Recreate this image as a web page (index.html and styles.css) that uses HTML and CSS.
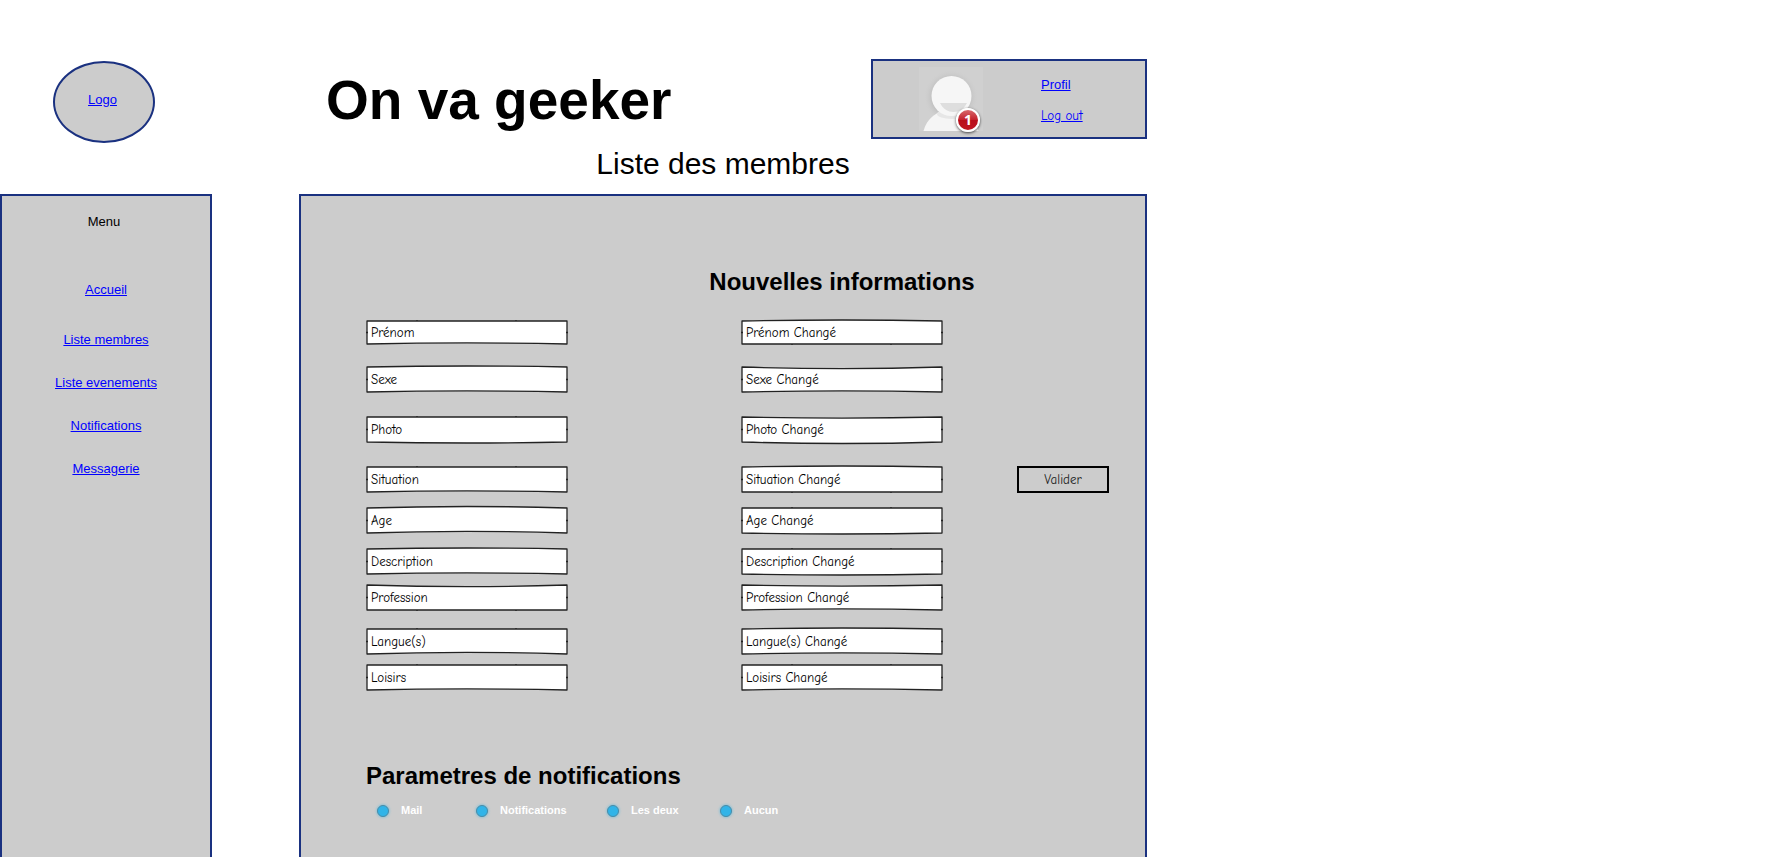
FILE: index.html
```
<!DOCTYPE html>
<html lang="fr">
<head>
<meta charset="utf-8">
<title>On va geeker</title>
<link rel="stylesheet" href="styles.css">
</head>
<body>
<div class="page">
  <header class="header">
    <div class="logo"><a href="#">Logo</a></div>
    <h1 class="title">On va geeker</h1>
    <div class="user">
      <div class="avatar">
        <svg viewBox="0 0 64 64" width="64" height="64" aria-hidden="true">
          <defs>
            <radialGradient id="halo"><stop offset="0.7" stop-color="#aaa"/><stop offset="1" stop-color="#ccc" stop-opacity="0"/></radialGradient>
          </defs>
          <rect width="64" height="64" fill="#d0d0d0"/>
          <circle cx="32" cy="30" r="27" fill="url(#halo)" opacity="0.4"/>
          <path d="M4.500 64C8 51 18 43 32 43s24 8 27.500 21z" fill="#f5f5f5"/>
          <ellipse cx="33" cy="47" rx="15" ry="5" fill="#e6e6e6"/>
          <circle cx="32.500" cy="29" r="20" fill="#f6f6f6"/>
          <path d="M21 36h27c-3 6-8 9-13.500 9S24 42 21 36z" fill="#dedede"/>
        </svg>
        <span class="badge">1</span>
      </div>
      <nav class="user-links">
        <a href="#">Profil</a>
        <a href="#" class="hand">Log out</a>
      </nav>
    </div>
    <p class="subtitle">Liste des membres</p>
  </header>

  <nav class="sidebar">
    <p class="menu-title">Menu</p>
    <ul class="menu">
      <li class="home"><a href="#">Accueil</a></li>
      <li><a href="#">Liste membres</a></li>
      <li><a href="#">Liste evenements</a></li>
      <li><a href="#">Notifications</a></li>
      <li><a href="#">Messagerie</a></li>
    </ul>
  </nav>

  <main class="content">
    <form>
      <div class="row head"><h2 class="new">Nouvelles informations</h2></div>

      <div class="row first">
        <div class="field"><svg viewBox="0 0 202 24" preserveAspectRatio="none"><path d="M1 1H201V23Q101 21 1 23ZM51 0v1M150 0v1M0 12h2M200 12h2"/></svg><input aria-label="Prénom" value="Prénom"></div>
        <div class="field changed"><svg viewBox="0 0 202 24" preserveAspectRatio="none"><path d="M1 1Q101 -1 201 1V23H1ZM51 23v1M150 23v1M0 12h2M200 12h2"/></svg><input aria-label="Nouveau prénom" value="Prénom Changé"></div>
      </div>
      <div class="row gap-l">
        <div class="field"><svg viewBox="0 0 202 26" preserveAspectRatio="none"><path d="M1 1Q101 -1 201 1V25Q101 23 1 25ZM0 13h2M200 13h2"/></svg><input aria-label="Sexe" value="Sexe"></div>
        <div class="field changed"><svg viewBox="0 0 202 26" preserveAspectRatio="none"><path d="M1 1Q101 4 201 1V25Q101 23 1 25ZM0 13h2M200 13h2"/></svg><input aria-label="Nouveau sexe" value="Sexe Changé"></div>
      </div>
      <div class="row gap-l">
        <div class="field"><svg viewBox="0 0 202 26" preserveAspectRatio="none"><path d="M1 1H201V25Q101 27 1 25ZM51 0v1M150 0v1M0 13h2M200 13h2"/></svg><input aria-label="Photo" value="Photo"></div>
        <div class="field changed"><svg viewBox="0 0 202 26" preserveAspectRatio="none"><path d="M1 1Q101 3 201 1V25Q101 28 1 25ZM0 13h2M200 13h2"/></svg><input aria-label="Nouvelle photo" value="Photo Changé"></div>
      </div>
      <div class="row gap-l">
        <div class="field"><svg viewBox="0 0 202 26" preserveAspectRatio="none"><path d="M1 1H201V25Q101 23 1 25ZM51 0v1M150 0v1M0 13h2M200 13h2"/></svg><input aria-label="Situation" value="Situation"></div>
        <div class="field changed"><svg viewBox="0 0 202 26" preserveAspectRatio="none"><path d="M1 1Q101 -1 201 1V25H1ZM51 25v1M150 25v1M0 13h2M200 13h2"/></svg><input aria-label="Nouvelle situation" value="Situation Changé"></div>
        <button type="submit" class="submit">Valider</button>
      </div>
      <div class="row gap-s">
        <div class="field"><svg viewBox="0 0 202 26" preserveAspectRatio="none"><path d="M1 1Q101 -2 201 1V25Q101 22 1 25ZM0 13h2M200 13h2"/></svg><input aria-label="Age" value="Age"></div>
        <div class="field changed"><svg viewBox="0 0 202 26" preserveAspectRatio="none"><path d="M1 1H201V25Q101 27 1 25ZM51 0v1M150 0v1M0 13h2M200 13h2"/></svg><input aria-label="Nouvel age" value="Age Changé"></div>
      </div>
      <div class="row gap-s">
        <div class="field"><svg viewBox="0 0 202 26" preserveAspectRatio="none"><path d="M1 1Q101 -1 201 1V25Q101 23 1 25ZM0 13h2M200 13h2"/></svg><input aria-label="Description" value="Description"></div>
        <div class="field changed"><svg viewBox="0 0 202 26" preserveAspectRatio="none"><path d="M1 1H201V25Q101 27 1 25ZM51 0v1M150 0v1M0 13h2M200 13h2"/></svg><input aria-label="Nouvelle description" value="Description Changé"></div>
      </div>
      <div class="row gap-xs">
        <div class="field"><svg viewBox="0 0 202 26" preserveAspectRatio="none"><path d="M1 1Q101 4 201 1V25H1ZM51 25v1M150 25v1M0 13h2M200 13h2"/></svg><input aria-label="Profession" value="Profession"></div>
        <div class="field changed"><svg viewBox="0 0 202 26" preserveAspectRatio="none"><path d="M1 1Q101 3 201 1V25Q101 23 1 25ZM0 13h2M200 13h2"/></svg><input aria-label="Nouvelle profession" value="Profession Changé"></div>
      </div>
      <div class="row gap-m">
        <div class="field"><svg viewBox="0 0 202 26" preserveAspectRatio="none"><path d="M1 1H201V25Q101 22 1 25ZM51 0v1M150 0v1M0 13h2M200 13h2"/></svg><input aria-label="Langue(s)" value="Langue(s)"></div>
        <div class="field changed"><svg viewBox="0 0 202 26" preserveAspectRatio="none"><path d="M1 1Q101 -1 201 1V25Q101 23 1 25ZM0 13h2M200 13h2"/></svg><input aria-label="Nouvelle(s) langue(s)" value="Langue(s) Changé"></div>
      </div>
      <div class="row gap-xs">
        <div class="field"><svg viewBox="0 0 202 26" preserveAspectRatio="none"><path d="M1 1H201V25Q101 23 1 25ZM51 0v1M150 0v1M0 13h2M200 13h2"/></svg><input aria-label="Loisirs" value="Loisirs"></div>
        <div class="field changed"><svg viewBox="0 0 202 26" preserveAspectRatio="none"><path d="M1 1H201V25Q101 23 1 25ZM51 0v1M150 0v1M0 13h2M200 13h2"/></svg><input aria-label="Nouveaux loisirs" value="Loisirs Changé"></div>
      </div>

      <h2 class="settings">Parametres de notifications</h2>
      <div class="choices">
        <label><input type="radio" name="notif">Mail</label>
        <label><input type="radio" name="notif">Notifications</label>
        <label><input type="radio" name="notif">Les deux</label>
        <label><input type="radio" name="notif">Aucun</label>
      </div>
    </form>
  </main>
</div>
</body>
</html>
```

FILE: styles.css
```
* { box-sizing: border-box; }

body {
  margin: 0;
  background: #fff;
  color: #000;
  font: 13px/16px "Liberation Sans", Arial, sans-serif;
}

h1, h2, p, ul { margin: 0; padding: 0; }
a { color: #00f; }

.page {
  display: grid;
  grid-template-columns: 212px minmax(0, 1fr);
  grid-template-rows: auto 1fr;
  column-gap: 87px;
  max-width: 1147px;
  min-height: 100vh;
}

.header {
  grid-column: 1 / -1;
  display: grid;
  grid-template-columns: 299px 1fr 276px;
  grid-template-rows: 84px auto;
  padding-top: 59px;
}

.logo {
  display: grid;
  place-items: center;
  width: 102px;
  height: 82px;
  margin: 2px 0 0 53px;
  padding: 0 3px 4px 0;
  border: 2px solid #1a3180;
  border-radius: 50%;
  background: #ccc;
}

.title {
  padding: 11px 0 0 27px;
  font-size: 55px;
  line-height: 60px;
}

.user {
  display: flex;
  align-items: flex-start;
  height: 80px;
  padding: 6px 0 0 46px;
  border: 2px solid #1a3180;
  background: #ccc;
}

.avatar { position: relative; width: 64px; height: 64px; }
.avatar svg { display: block; }

.badge {
  position: absolute;
  right: 3px;
  bottom: -1px;
  width: 24px;
  height: 24px;
  border: 2px solid #fff;
  border-radius: 50%;
  background: linear-gradient(#d8686c, #c3202b 50%, #b80d1a 50%, #c01522);
  box-shadow: 0 1px 3px rgba(0, 0, 0, 0.7);
  color: #fff;
  font: bold 14px/20px "Open Sans", sans-serif;
  text-align: center;
}

.user-links {
  display: flex;
  flex-direction: column;
  gap: 15px;
  padding: 10px 0 0 58px;
}

.hand { font-family: "Comic Sans MS", "Comic Neue", Lato, sans-serif; }

.subtitle {
  grid-column: 2 / -1;
  padding: 5px 0 14px;
  font-size: 30px;
  line-height: 32px;
  text-align: center;
}

.sidebar {
  padding-top: 18px;
  border: 2px solid #1a3180;
  border-bottom: 0;
  background: #ccc;
  text-align: center;
}

.menu-title { padding-right: 4px; }

.menu {
  display: flex;
  flex-direction: column;
  gap: 27px;
  padding-top: 52px;
  list-style: none;
}
.menu .home { padding-bottom: 7px; }

.content {
  padding: 72px 36px 30px 65px;
  border: 2px solid #1a3180;
  border-bottom: 0;
  background: #ccc;
}

h2 { font-size: 24px; line-height: 28px; }

.row {
  display: grid;
  grid-template-columns: 202px 1fr 202px 74px 92px;
  height: 27px;
}
.row.head { height: 28px; }
.row.first { height: 25px; margin-top: 24px; }
.gap-xs { margin-top: 9px; }
.gap-s { margin-top: 14px; }
.gap-m { margin-top: 17px; }
.gap-l { margin-top: 23px; }
.first + .gap-l { margin-top: 21px; }

.new { grid-column: 3; justify-self: center; white-space: nowrap; }

.field { display: grid; }
.changed { grid-column: 3; }
.field svg, .field input {
  grid-area: 1 / 1;
  width: 100%;
  height: 100%;
}
.field svg {
  overflow: visible;
  fill: #fff;
  stroke: #222;
  stroke-width: 1.3;
  stroke-linejoin: round;
}
.field input {
  position: relative;
  min-width: 0;
  padding: 0 5px;
  border: 0;
  background: none;
  color: #000;
  font: 13px/16px "Comic Sans MS", "Comic Neue", Lato, sans-serif;
}

.submit {
  grid-column: 5;
  padding: 0;
  border: 2px solid #000;
  background: none;
  color: #222;
  font: 13px/16px "Comic Sans MS", "Comic Neue", Lato, sans-serif;
}

.settings { margin-top: 71px; }

.choices {
  display: grid;
  grid-template-columns: 99px 131px 113px auto;
  padding: 12px 0 0 11px;
  color: #fff;
  font-size: 11px;
  font-weight: bold;
}
.choices label { display: flex; align-items: center; gap: 12px; }
.choices input {
  appearance: none;
  flex: none;
  width: 12px;
  height: 12px;
  margin: 2px 0 0;
  border: 1px solid #4a8ba6;
  border-radius: 50%;
  background: #31b4e8;
  box-shadow: 0 0 3px #58b9dd;
}
```
